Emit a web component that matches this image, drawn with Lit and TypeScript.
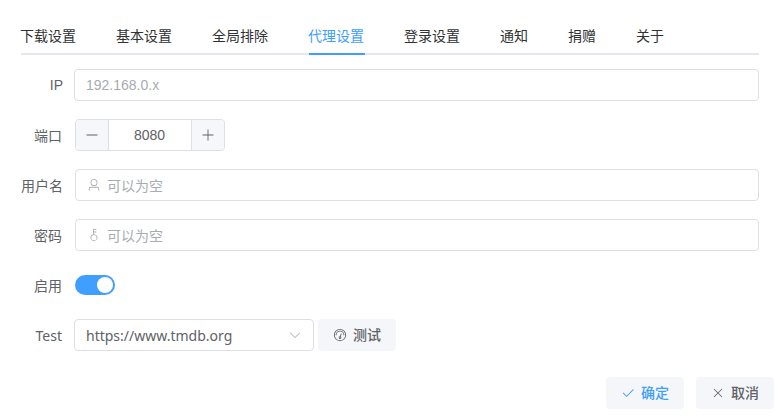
import { LitElement, html, css, svg } from "lit";
import { customElement } from "lit/decorators.js";

const ic = (inner: unknown, cls = "") => html`<svg class="icon ${cls}" viewBox="0 0 1024 1024" fill="currentColor" aria-hidden="true">${inner}</svg>`;
const P = {
  user: svg`<path d="M512 512a192 192 0 1 0 0-384 192 192 0 0 0 0 384m0 64a256 256 0 1 1 0-512 256 256 0 0 1 0 512m320 320v-96a96 96 0 0 0-96-96H288a96 96 0 0 0-96 96v96a32 32 0 1 1-64 0v-96a160 160 0 0 1 160-160h448a160 160 0 0 1 160 160v96a32 32 0 1 1-64 0"/>`,
  key: svg`<path d="M448 456.064V96a32 32 0 0 1 32-32.064L672 64a32 32 0 0 1 0 64H512v128h160a32 32 0 0 1 0 64H512v128a256 256 0 1 1-64 8.064M512 896a192 192 0 1 0 0-384 192 192 0 0 0 0 384"/>`,
  odometer: svg`<path d="M512 896a384 384 0 1 0 0-768 384 384 0 0 0 0 768m0 64a448 448 0 1 1 0-896 448 448 0 0 1 0 896"/><path d="M192 512a320 320 0 1 1 640 0 32 32 0 1 1-64 0 256 256 0 1 0-512 0 32 32 0 0 1-64 0"/><path d="M570.432 627.84A96 96 0 1 1 509.568 608l60.992-187.776A32 32 0 1 1 631.424 440l-60.992 187.776zM502.08 734.464a32 32 0 1 0 19.84-60.928 32 32 0 0 0-19.84 60.928"/>`,
  check: svg`<path d="M406.656 706.944 195.84 496.256a32 32 0 1 0-45.248 45.248l256 256 512-512a32 32 0 0 0-45.248-45.248L406.592 706.944z"/>`,
  close: svg`<path d="M764.288 214.592 512 466.88 259.712 214.592a31.936 31.936 0 0 0-45.12 45.12L466.752 512 214.528 764.224a31.936 31.936 0 1 0 45.12 45.184L512 557.184l252.288 252.288a31.936 31.936 0 0 0 45.12-45.12L557.12 512.064l252.288-252.352a31.936 31.936 0 1 0-45.12-45.184z"/>`,
  minus: svg`<path d="M128 544h768a32 32 0 1 0 0-64H128a32 32 0 0 0 0 64"/>`,
  plus: svg`<path d="M480 480V128a32 32 0 0 1 64 0v352h352a32 32 0 1 1 0 64H544v352a32 32 0 1 1-64 0V544H128a32 32 0 0 1 0-64z"/>`,
  arrow: svg`<path d="M831.872 340.864 512 652.672 192.128 340.864a30.592 30.592 0 0 0-42.752 0 29.12 29.12 0 0 0 0 41.6L489.664 714.24a32 32 0 0 0 44.672 0l340.288-331.712a29.12 29.12 0 0 0 0-41.728 30.592 30.592 0 0 0-42.752 0z"/>`,
};

const TABS = ["下载设置", "基本设置", "全局排除", "代理设置", "登录设置", "通知", "捐赠", "关于"];

@customElement("app-root")
export class AppRoot extends LitElement {
  static styles = css`
    :host {
      display: block;
      width: 781px;
      height: 420px;
      box-sizing: border-box;
      padding: 15px 7px 0 21px;
      background: #fff;
      overflow: hidden;
      font-family: "Noto Sans", "Noto Sans CJK SC", sans-serif;
      font-size: 14px;
      color: #606266;
    }
    .tabs {
      display: flex;
      gap: 40px;
      height: 40px;
      margin-right: 15px;
      box-sizing: border-box;
      border-bottom: 2px solid #e4e7ed;
    }
    .tab {
      height: 40px;
      box-sizing: border-box;
      line-height: 42px;
      color: #303133;
      white-space: nowrap;
      flex: none;
    }
    .tab span {
      display: block;
      margin: 0 1px 0 -1px;
    }
    .tab.active {
      color: #409eff;
      border-bottom: 2px solid #409eff;
    }
    .form {
      display: flex;
      flex-direction: column;
      gap: 18px;
      margin: 14px 15px 0 0;
    }
    .row {
      display: flex;
      align-items: center;
      height: 32px;
    }
    .label {
      flex: none;
      width: 54px;
      box-sizing: border-box;
      padding-right: 13px;
      text-align: right;
      white-space: nowrap;
    }
    .tight .label {
      width: 53px;
      padding-right: 12px;
    }
    .tight .label.arial {
      padding-right: 11px;
    }
    .control {
      flex: 1;
      min-width: 0;
      display: flex;
      align-items: center;
      gap: 4px;
    }
    .input {
      flex: 1;
      height: 32px;
      box-sizing: border-box;
      display: flex;
      align-items: center;
      gap: 6px;
      padding: 0 11px;
      border: 1px solid #dcdfe6;
      border-radius: 4px;
      background: #fff;
      color: #a8abb2;
    }
    .arial {
      font-family: "Liberation Sans", "Noto Sans CJK SC", sans-serif;
    }
    .icon {
      width: 14px;
      height: 14px;
      flex: none;
      display: block;
    }
    .number {
      display: flex;
      width: 150px;
      height: 32px;
      box-sizing: border-box;
      border: 1px solid #dcdfe6;
      border-radius: 4px;
      overflow: hidden;
    }
    .step {
      flex: none;
      width: 32px;
      background: #f5f7fa;
      display: flex;
      align-items: center;
      justify-content: center;
      color: #606266;
    }
    .step.left { border-right: 1px solid #dcdfe6; }
    .step.right { border-left: 1px solid #dcdfe6; }
    .value {
      flex: 1;
      text-align: center;
      line-height: 30px;
      padding-right: 1px;
      color: #606266;
    }
    .switch {
      width: 40px;
      height: 20px;
      box-sizing: border-box;
      padding: 2px;
      border-radius: 10px;
      background: #409eff;
      display: flex;
      justify-content: flex-end;
    }
    .knob {
      width: 16px;
      height: 16px;
      border-radius: 50%;
      background: #fff;
    }
    .select {
      flex: none;
      width: 240px;
      height: 32px;
      box-sizing: border-box;
      display: flex;
      align-items: center;
      justify-content: space-between;
      padding: 0 11px;
      border: 1px solid #dcdfe6;
      border-radius: 4px;
      color: #606266;
    }
    .select .icon { color: #a8abb2; }
    .btn {
      flex: none;
      width: 78px;
      height: 32px;
      box-sizing: border-box;
      display: flex;
      align-items: center;
      justify-content: center;
      gap: 6px;
      border-radius: 4px;
      background: #f4f6fa;
      color: #606266;
      font-weight: 500;
    }
    .btn span {
      margin-bottom: 2px;
    }
    .btn.primary { color: #409eff; }
    .footer {
      display: flex;
      justify-content: flex-end;
      gap: 12px;
      margin-top: 26px;
    }
  `;

  render() {
    return html`
      <div class="tabs">
        ${TABS.map((t, i) => html`<div class="tab ${i === 3 ? "active" : ""}"><span>${t}</span></div>`)}
      </div>
      <div class="form">
        <div class="row tight">
          <div class="label arial">IP</div>
          <div class="control"><div class="input arial">192.168.0.x</div></div>
        </div>
        <div class="row">
          <div class="label">端口</div>
          <div class="control">
            <div class="number">
              <div class="step left">${ic(P.minus)}</div>
              <div class="value arial">8080</div>
              <div class="step right">${ic(P.plus)}</div>
            </div>
          </div>
        </div>
        <div class="row">
          <div class="label">用户名</div>
          <div class="control"><div class="input">${ic(P.user)}<span>可以为空</span></div></div>
        </div>
        <div class="row">
          <div class="label">密码</div>
          <div class="control"><div class="input">${ic(P.key)}<span>可以为空</span></div></div>
        </div>
        <div class="row">
          <div class="label">启用</div>
          <div class="control"><div class="switch"><div class="knob"></div></div></div>
        </div>
        <div class="row tight">
          <div class="label">Test</div>
          <div class="control">
            <div class="select"><span>https://www.tmdb.org</span>${ic(P.arrow)}</div>
            <div class="btn">${ic(P.odometer)}<span>测试</span></div>
          </div>
        </div>
      </div>
      <div class="footer">
        <div class="btn primary">${ic(P.check)}<span>确定</span></div>
        <div class="btn">${ic(P.close)}<span>取消</span></div>
      </div>
    `;
  }
}
